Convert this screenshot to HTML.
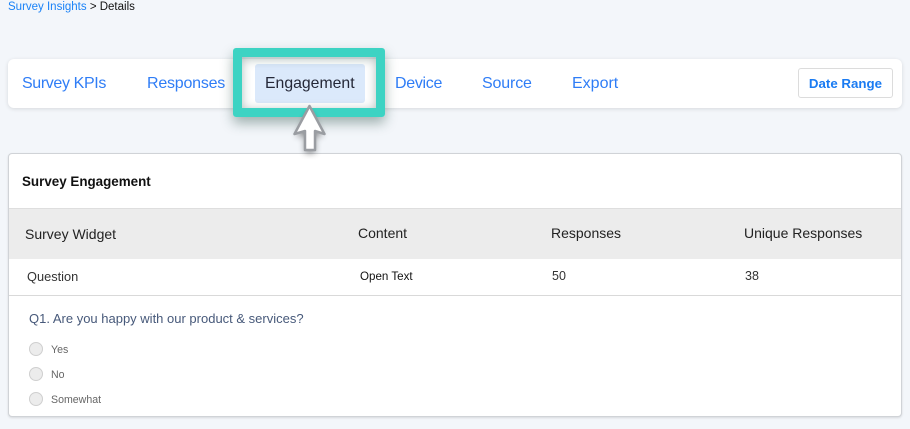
<!DOCTYPE html>
<html><head><meta charset="utf-8">
<style>
html,body{margin:0;padding:0}
body{width:910px;height:429px;background:#f3f6fa;position:relative;overflow:hidden;font-family:"Liberation Sans",sans-serif}
.t{position:absolute;white-space:nowrap;line-height:1}
.nav{color:#2f7df6;font-size:16px;top:76px}
.hd{color:#222;font-size:14px}
.rd{position:absolute;left:29px;width:12px;height:12px;border-radius:50%;background:#ececec;border:1px solid #cfcfcf}
.op{color:#666;font-size:10.6px;left:51px}
</style></head>
<body>
<div class="t" style="left:8px;top:2px;font-size:11.5px;color:#111"><span style="color:#1a82f7">Survey Insights</span> &gt; Details</div>

<div style="position:absolute;left:8px;top:59px;width:894px;height:49px;background:#fff;border-radius:6px;box-shadow:0 1px 4px rgba(0,0,0,.12)"></div>
<div class="t nav" style="left:22px;letter-spacing:-.37px">Survey KPIs</div>
<div class="t nav" style="left:147px;letter-spacing:-.22px">Responses</div>
<div style="position:absolute;left:255px;top:64px;width:110px;height:39px;background:#dbe9fb;border-radius:3px"></div>
<div class="t" style="left:265px;top:76px;font-size:15.8px;color:#252838">Engagement</div>
<div class="t nav" style="left:395px;letter-spacing:-.3px">Device</div>
<div class="t nav" style="left:482px;letter-spacing:-.15px">Source</div>
<div class="t nav" style="left:572px">Export</div>
<div style="position:absolute;left:798px;top:68px;width:93px;height:28px;border:1px solid #dcdcdc;border-radius:3px;background:#fff;text-align:center;line-height:30px;color:#1a7bf2;font-size:13.3px;font-weight:bold">Date Range</div>

<div style="position:absolute;left:8px;top:153px;width:892px;height:262px;background:#fff;border:1px solid #d0d3d7;border-radius:4px;box-shadow:0 1px 2px rgba(0,0,0,.12)"></div>
<div class="t" style="left:22px;top:175px;font-size:13.4px;font-weight:bold;color:#111">Survey Engagement</div>
<div style="position:absolute;left:9px;top:208px;width:892px;height:50px;background:#ececec;border-top:1px solid #dedede"></div>
<div class="t hd" style="left:25px;top:227px;font-size:14px">Survey Widget</div>
<div class="t hd" style="left:358px;top:226px">Content</div>
<div class="t hd" style="left:551px;top:226px">Responses</div>
<div class="t hd" style="left:744px;top:226px">Unique Responses</div>
<div class="t" style="left:27px;top:271px;font-size:12.8px;color:#333">Question</div>
<div class="t" style="left:360px;top:271px;font-size:11.6px;color:#111">Open Text</div>
<div class="t" style="left:552px;top:270px;font-size:12.5px;color:#333">50</div>
<div class="t" style="left:745px;top:270px;font-size:12.5px;color:#333">38</div>
<div style="position:absolute;left:9px;top:295px;width:892px;height:1px;background:#d9d9d9"></div>
<div class="t" style="left:29px;top:312px;font-size:13px;color:#47597a">Q1. Are you happy with our product &amp; services?</div>
<div class="rd" style="top:342px"></div><div class="t op" style="top:345px">Yes</div>
<div class="rd" style="top:367px"></div><div class="t op" style="top:370px">No</div>
<div class="rd" style="top:392px"></div><div class="t op" style="top:395px">Somewhat</div>

<div style="position:absolute;left:233px;top:48px;width:134px;height:51px;border:9px solid #3dd3c3;border-radius:3px;box-shadow:0 6px 12px rgba(30,70,60,.4),inset 0 2px 10px rgba(30,70,60,.35)"></div>
<svg style="position:absolute;left:285px;top:98px" width="50" height="65" viewBox="0 0 50 65">
<defs><filter id="s" x="-50%" y="-50%" width="200%" height="200%"><feGaussianBlur stdDeviation="3.500"/></filter></defs>
<path d="M24.500 9 L38 35 L30 33 L30 51 L20 51 L20 33 L11 35 Z" fill="#000" opacity=".45" filter="url(#s)" transform="translate(0 4)"/>
<path d="M24.500 8 L39.500 36 L30 33 L30 52 L20 52 L20 33 L9.500 36 Z" fill="#fff" stroke="#9a9da2" stroke-width="2.500" stroke-linejoin="round"/>
</svg>
</body></html>
